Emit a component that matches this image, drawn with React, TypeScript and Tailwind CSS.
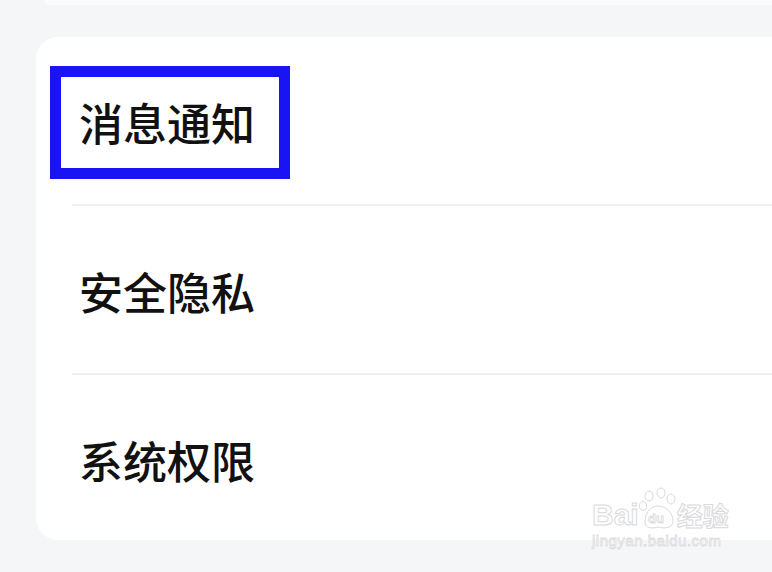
import React from "react";

const font = '"Noto Sans CJK SC", "Noto Sans", sans-serif';

function Row({ label, divider }: { label: string; divider?: boolean }) {
  return (
    <div className="flex flex-col">
      <div className="h-[167px] flex items-center pl-[43px] pt-[3px]">
        <span className="text-[44px] leading-none font-medium text-[#111111]" style={{ fontFamily: font }}>
          {label}
        </span>
      </div>
      {divider && <div className="ml-[36px] h-[2px] bg-[#f0f0f0]" />}
    </div>
  );
}

export default function App() {
  return (
    <div className="relative w-[772px] h-[572px] overflow-hidden bg-[#f5f6f8]" style={{ fontFamily: font }}>
      <div className="ml-[44px] h-[5px] bg-[#fbfbfc] rounded-bl-[16px]" />
      <div className="mt-[32px] ml-[36px] w-[760px] h-[503px] bg-white rounded-l-[22px] flex flex-col">
        <Row label="消息通知" divider />
        <Row label="安全隐私" divider />
        <Row label="系统权限" />
      </div>

      {/* annotation box */}
      <div className="absolute left-[50px] top-[66px] w-[240px] h-[113px] border-[11px] border-[#1a14f5]" />

      {/* watermark */}
      <div className="absolute left-[592px] top-[486px] flex flex-col items-start">
        <div className="flex items-end">
          <span
            className="text-[30px] leading-none font-bold text-white [-webkit-text-stroke:1px_#d9d9dc]"
            style={{ fontFamily: '"Liberation Sans", sans-serif' }}
          >
            Bai
          </span>
          <svg width="42" height="44" viewBox="0 0 42 44" className="mx-[-2px]">
            <g fill="white" stroke="#d9d9dc" strokeWidth="1">
              <ellipse cx="12" cy="10" rx="4" ry="5" />
              <ellipse cx="24" cy="7" rx="4" ry="5" />
              <ellipse cx="34" cy="13" rx="4" ry="5" />
              <ellipse cx="6" cy="20" rx="3.5" ry="4.5" />
              <path d="M8 36 C8 24 16 20 21 20 C28 20 36 26 36 35 C36 42 28 43 21 41 C14 43 8 42 8 36 Z" />
            </g>
            <text x="11" y="37" fontSize="13" fontWeight="bold" fill="white" stroke="#d9d9dc" strokeWidth="0.8" fontFamily="Liberation Sans, sans-serif">du</text>
          </svg>
          <span className="text-[26px] leading-none font-bold text-white [-webkit-text-stroke:1px_#d9d9dc] mb-[2px]">
            经验
          </span>
        </div>
        <span
          className="mt-[3px] text-[15px] leading-none text-white [-webkit-text-stroke:0.8px_#dcdcdf] tracking-[0.5px]"
          style={{ fontFamily: '"Liberation Sans", sans-serif' }}
        >
          jingyan.baidu.com
        </span>
      </div>
    </div>
  );
}
